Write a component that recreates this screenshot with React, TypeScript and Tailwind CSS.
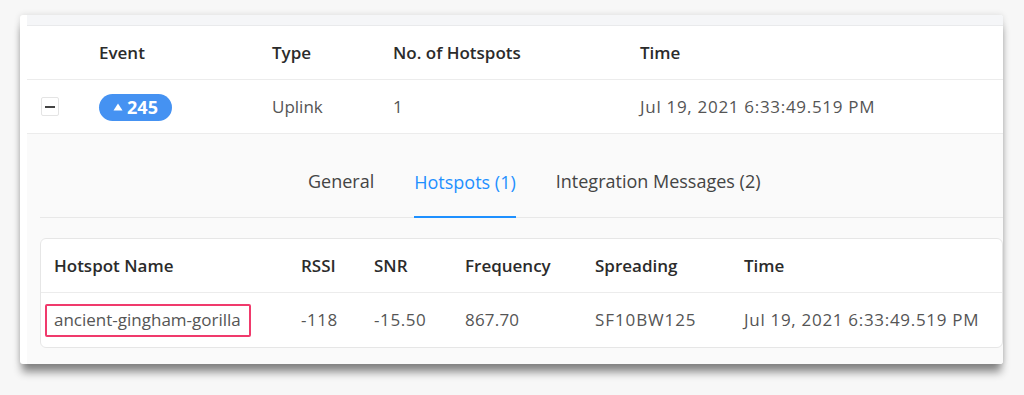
import React from "react";

const font = { fontFamily: "'Open Sans', Lato, sans-serif" };

export default function App() {
  return (
    <div
      className="w-[1024px] h-[395px] bg-[#f7f7f7] pt-[15px] pl-[20px] overflow-hidden"
      style={font}
    >
      <div className="w-[983px] h-[349px] bg-white pl-[7px] overflow-hidden rounded-[3px] shadow-[0_10px_8px_-2px_rgba(0,0,0,0.45),0_0_6px_rgba(0,0,0,0.12)]">
        <div className="h-[11px] bg-[#f5f6f8] border-b border-[#e9eaec]" />
        {/* header row */}
        <div className="h-[54px] flex items-center border-b border-[#ececec] text-[17px] font-semibold text-[#2b2b2b]">
          <div className="w-[72px] shrink-0" />
          <div className="w-[173px] shrink-0">Event</div>
          <div className="w-[121px] shrink-0">Type</div>
          <div className="w-[247px] shrink-0">No. of Hotspots</div>
          <div>Time</div>
        </div>
        {/* data row */}
        <div className="h-[54px] flex items-center border-b border-[#ececec] text-[17px] text-[#555]">
          <div className="w-[72px] shrink-0 pl-[14px]">
            <div className="w-[18px] h-[19px] border border-[#e4e4e4] rounded-[2px] bg-white flex items-center justify-center">
              <div className="w-[10px] h-[2px] bg-[#444]" />
            </div>
          </div>
          <div className="w-[173px] shrink-0">
            <span className="inline-flex items-center gap-[4px] h-[27px] w-[73px] justify-center rounded-full bg-[#4592f2] text-white font-bold text-[18px]">
              <svg width="10" height="8" viewBox="0 0 10 8">
                <path d="M5 0.5 L9.5 7.5 L0.5 7.5 Z" fill="white" />
              </svg>
              245
            </span>
          </div>
          <div className="w-[121px] shrink-0">Uplink</div>
          <div className="w-[247px] shrink-0">1</div>
          <div className="tracking-[0.7px]">Jul 19, 2021 6:33:49.519 PM</div>
        </div>
        {/* expanded */}
        <div className="h-[230px] bg-[#fafafa] pl-[13px]">
          <div className="h-[84px] flex items-end border-b border-[#e8e8e8] text-[18px] text-[#444]">
            <div className="flex h-full items-end pl-[268px] gap-[40px]">
              <div className="pb-[22px]">General</div>
              <div className="pb-[20px] text-[#1e90ff] border-b-2 border-[#1e90ff] mb-[-1px]">
                Hotspots (1)
              </div>
              <div className="pb-[22px]">Integration Messages (2)</div>
            </div>
          </div>
          <div className="mt-[20px] bg-white border border-[#e6e6e6] rounded-[6px] h-[110px] text-[17px]">
            <div className="h-[54px] flex items-center border-b border-[#ececec] font-semibold text-[#2b2b2b]">
              <div className="w-[260px] shrink-0 pl-[13px]">Hotspot Name</div>
              <div className="w-[73px] shrink-0">RSSI</div>
              <div className="w-[91px] shrink-0">SNR</div>
              <div className="w-[130px] shrink-0">Frequency</div>
              <div className="w-[149px] shrink-0">Spreading</div>
              <div>Time</div>
            </div>
            <div className="h-[54px] flex items-center text-[#555]">
              <div className="w-[260px] shrink-0 pl-[4px]">
                <div className="w-[206px] h-[33px] border-2 border-[#f03a6c] rounded-[2px] flex items-center pl-[7px]">
                  ancient-gingham-gorilla
                </div>
              </div>
              <div className="w-[73px] shrink-0 tracking-[0.5px]">-118</div>
              <div className="w-[91px] shrink-0 tracking-[0.6px]">-15.50</div>
              <div className="w-[130px] shrink-0 tracking-[0.2px]">867.70</div>
              <div className="w-[149px] shrink-0 tracking-[0.9px]">SF10BW125</div>
              <div className="tracking-[0.7px]">Jul 19, 2021 6:33:49.519 PM</div>
            </div>
          </div>
        </div>
      </div>
    </div>
  );
}
